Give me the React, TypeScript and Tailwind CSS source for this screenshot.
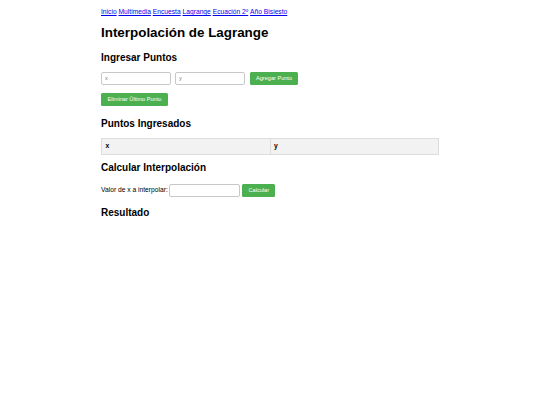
import { useState } from 'react';

const links = ['Inicio', 'Multimedia', 'Encuesta', 'Lagrange', 'Ecuación 2º', 'Año Bisiesto'];

export default function App() {
  const [points] = useState<Array<{ x: number; y: number }>>([]);

  return (
    <div className="min-h-[405px] bg-white text-black font-['Liberation_Sans',Arial,sans-serif]">
      <div className="mx-auto w-[338px] text-[6.7px] leading-[8px]">
        <nav className="pt-[8px] flex gap-[1.9px]">
          {links.map((l) => (
            <a key={l} className="text-[#0000ee] underline cursor-pointer">
              {l}
            </a>
          ))}
        </nav>

        <h1 className="mt-[8.5px] text-[13.4px] leading-[16px] font-bold">Interpolación de Lagrange</h1>

        <h2 className="mt-[11px] text-[10px] leading-[12px] font-bold">Ingresar Puntos</h2>
        <div className="mt-[8px] flex items-center">
          <Field placeholder="x" />
          <div className="w-[4px]" />
          <Field placeholder="y" />
          <div className="w-[5px]" />
          <GreenButton label="Agregar Punto" width="w-[48px]" />
        </div>
        <div className="mt-[8px] flex">
          <GreenButton label="Eliminar Último Punto" width="w-[67px]" />
        </div>

        <h2 className="mt-[12px] text-[10px] leading-[12px] font-bold">Puntos Ingresados</h2>
        <table className="mt-[8px] w-full border-collapse">
          <thead>
            <tr className="bg-[#f2f2f2] h-[16px]">
              <th className="w-1/2 border border-[#dddddd] px-[3.5px] text-left font-bold">x</th>
              <th className="w-1/2 border border-[#dddddd] px-[3.5px] text-left font-bold">y</th>
            </tr>
          </thead>
          <tbody>
            {points.map((p, i) => (
              <tr key={i}>
                <td className="border border-[#dddddd] px-[3.5px]">{p.x}</td>
                <td className="border border-[#dddddd] px-[3.5px]">{p.y}</td>
              </tr>
            ))}
          </tbody>
        </table>

        <h2 className="mt-[7px] text-[10px] leading-[12px] font-bold">Calcular Interpolación</h2>
        <div className="mt-[10px] flex items-center">
          <label className="mr-[1.5px]">Valor de x a interpolar:</label>
          <Field placeholder="" width="w-[71px]" />
          <div className="w-[2px]" />
          <GreenButton label="Calcular" width="w-[33px]" />
        </div>

        <h2 className="mt-[10px] text-[10px] leading-[12px] font-bold">Resultado</h2>
      </div>
    </div>
  );
}

function Field({ placeholder, width = 'w-[70px]' }: { placeholder: string; width?: string }) {
  return (
    <input
      placeholder={placeholder}
      className={`${width} h-[13px] border border-[#c8c8c8] rounded-[2px] px-[3px] text-[5.6px] placeholder:text-[#7a7a7a] outline-none`}
    />
  );
}

function GreenButton({ label, width }: { label: string; width: string }) {
  return (
    <button className={`${width} h-[13px] bg-[#4caf50] text-white text-[5.6px] leading-[13px] rounded-[1.5px] text-center whitespace-nowrap`}>
      {label}
    </button>
  );
}
